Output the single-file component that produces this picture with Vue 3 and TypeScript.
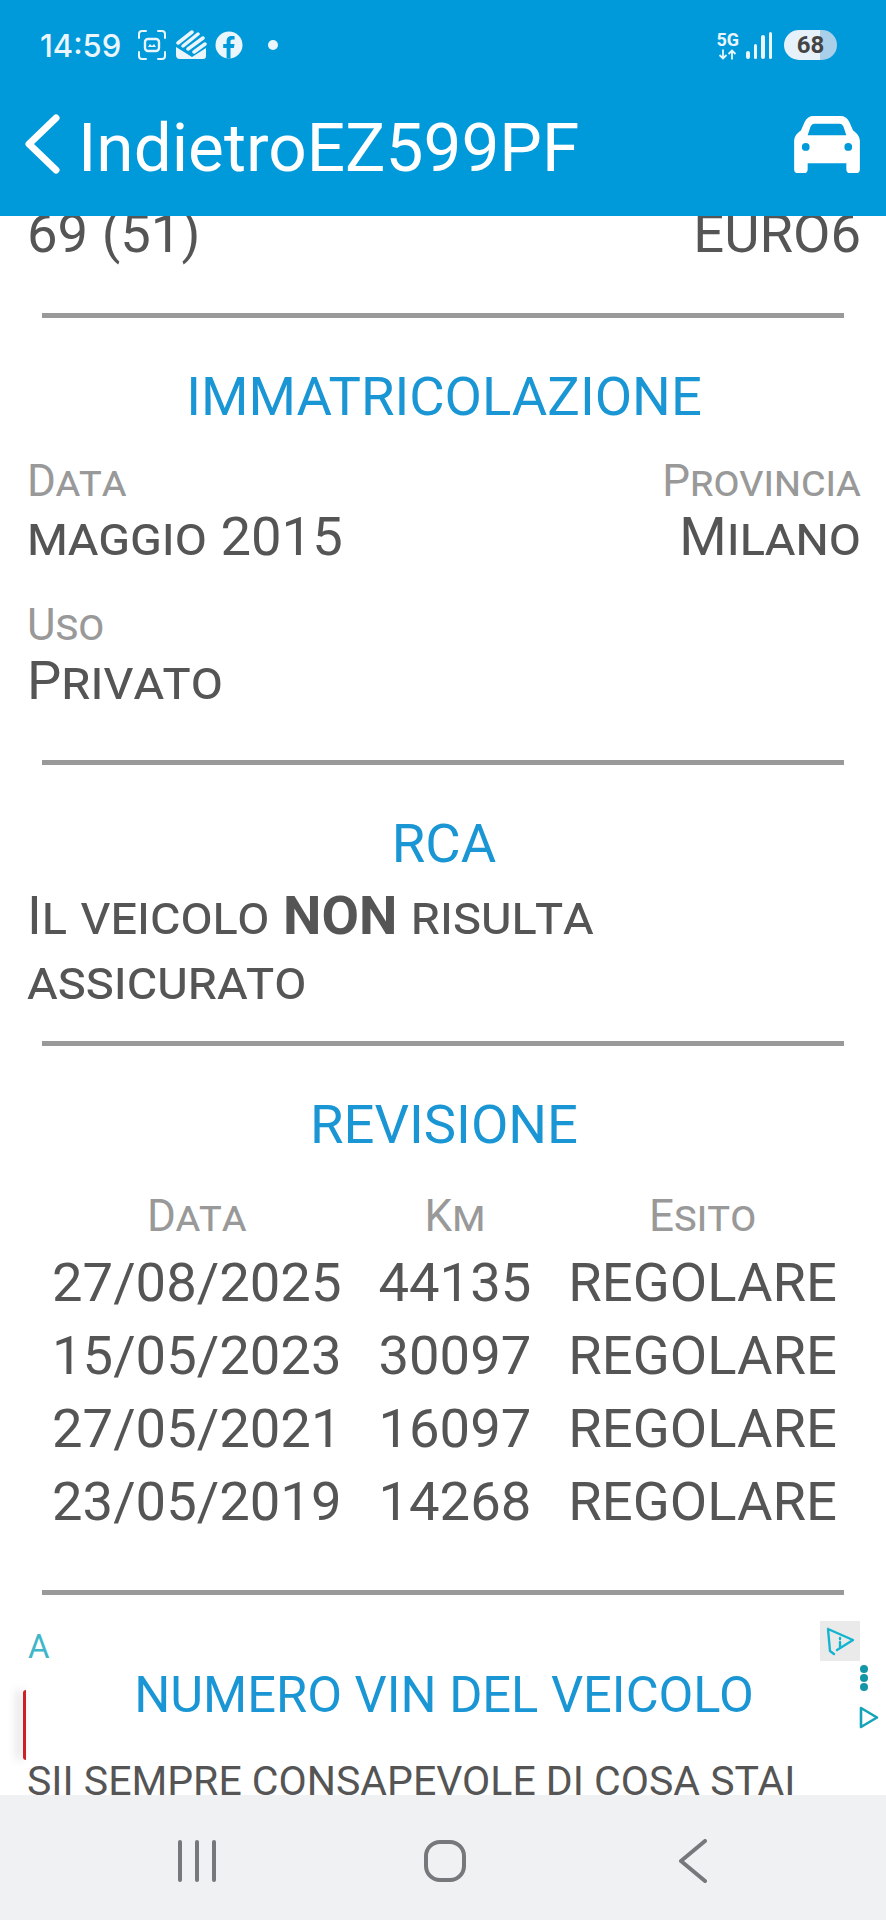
<template>
  <div class="phone">
    <header class="topbar">
      <div class="status">
        <div class="status-left">
          <span class="clock">14:59</span>
          <svg class="ic" width="30" height="30" viewBox="0 0 30 30" fill="none" stroke="#eaf6fc" stroke-width="2" stroke-linecap="round">
            <path d="M2 8V4a3 3 0 0 1 3-3h4M21 1h4a3 3 0 0 1 3 3v4M28 22v4a3 3 0 0 1-3 3h-4M9 29H5a3 3 0 0 1-3-3v-4" />
            <rect x="8" y="9" width="14" height="12" rx="3" stroke-width="2.4" />
            <path d="M11 17l2-3 2 2 2-2 2 3z" fill="#eaf6fc" stroke="none" />
          </svg>
          <svg class="ic" width="32" height="32" viewBox="0 0 32 32">
            <path d="M1 18 17 28l14-9v8a3 3 0 0 1-3 3H5a4 4 0 0 1-4-4z" fill="#eaf6fc" />
            <path d="M3 14 17 3M8 17 23 5M13 20 28 9M19 23 30 15" stroke="#eaf6fc" stroke-width="3.500" stroke-linecap="round" />
          </svg>
          <svg class="ic" width="28" height="28" viewBox="0 0 28 28">
            <circle cx="14" cy="14" r="13.5" fill="#eaf6fc" />
            <path d="M15.5 27.5V17h3.4l.6-4h-4v-2.4c0-1.2.5-2 2.1-2h2V5.200C19 5 17.800 5 16.700 5c-3 0-5.100 1.800-5.100 5.100V13H8.200v4h3.400v10.500z" fill="#0099da" />
          </svg>
          <span class="dot"></span>
        </div>
        <div class="status-right">
          <div class="net">
            <span class="net-label">5G</span>
            <svg width="20" height="11" viewBox="0 0 20 10" fill="none" stroke="#eaf6fc" stroke-width="1.800">
              <path d="M5 0v9M1.500 5.500 5 9l3.500-3.500M14 10V1M10.500 4.500 14 1l3.500 3.500" />
            </svg>
          </div>
          <div class="signal">
            <i v-for="h in signalBars" :key="h" :style="{ height: h + 'px' }"></i>
          </div>
          <div class="battery"><span>68</span></div>
        </div>
      </div>
      <div class="navbar">
        <div class="back">
          <svg width="38" height="60" viewBox="0 0 38 60" fill="none" stroke="#fff" stroke-width="7" stroke-linecap="round" stroke-linejoin="round">
            <path d="M32 4 5 30l27 26" />
          </svg>
          <span>IndietroEZ599PF</span>
        </div>
        <svg class="car" width="66" height="58" viewBox="0 0 68 60">
          <path fill="#fff" fill-rule="evenodd" d="M20 1h28c4 0 7 2 9 6l4 9c4 3 7 6 7 11v29a4 4 0 0 1-4 4h-6a4 4 0 0 1-4-4v-6H14v6a4 4 0 0 1-4 4H4a4 4 0 0 1-4-4V27c0-5 3-8 7-11l4-9c2-4 5-6 9-6zM21 9c-2 0-3 1-4 3l-3 9h40l-3-9c-1-2-2-3-4-3zM12 29a4 4 0 1 0 0 8 4 4 0 0 0 0-8zM56 29a4 4 0 1 0 0 8 4 4 0 0 0 0-8z" />
        </svg>
      </div>
    </header>

    <main class="scroller">
      <div class="scroll-inner">
        <div class="pair first">
          <div class="value">69 (51)</div>
          <div class="value">EURO6</div>
        </div>
        <hr />

        <h2>IMMATRICOLAZIONE</h2>
        <div class="pair">
          <div>
            <div class="label">Data</div>
            <div class="value sc">maggio 2015</div>
          </div>
          <div class="right">
            <div class="label">Provincia</div>
            <div class="value sc">Milano</div>
          </div>
        </div>
        <div class="use">
          <div class="label">Uso</div>
          <div class="value sc">Privato</div>
        </div>
        <hr />

        <h2>RCA</h2>
        <p class="value sc rca-text">Il veicolo <b>NON</b> risulta assicurato</p>
        <hr class="tight" />

        <h2>REVISIONE</h2>
        <div class="rev">
          <div class="label">Data</div>
          <div class="label">Km</div>
          <div class="label">Esito</div>
          <template v-for="r in revisions" :key="r.date">
            <div class="value">{{ r.date }}</div>
            <div class="value">{{ r.km }}</div>
            <div class="value">{{ r.result }}</div>
          </template>
        </div>
        <hr />

        <h2 class="vin">NUMERO VIN DEL VEICOLO</h2>
        <p class="vin-text">SII SEMPRE CONSAPEVOLE DI COSA STAI</p>
      </div>

      <!-- ad overlay bits -->
      <span class="ad-a">A</span>
      <span class="ad-red"></span>
      <div class="ad-info">
        <svg width="30" height="30" viewBox="0 0 30 30" fill="none" stroke="#14b4cf" stroke-width="2.400" stroke-linecap="round" stroke-linejoin="round">
          <path d="M3 3 28 14 12 24M3 3l2 22 4 3M15 12v1M15 16v5" />
        </svg>
      </div>
      <div class="ad-dots"><i></i><i></i><i></i></div>
      <svg class="ad-play" width="20" height="24" viewBox="0 0 20 24" fill="none" stroke="#14a3b8" stroke-width="2.600" stroke-linejoin="round">
        <path d="M2 2 18 11.500 2 21z" />
      </svg>
    </main>

    <nav class="sysnav">
      <svg width="42" height="42" viewBox="0 0 42 42" fill="none" stroke="#77787c" stroke-width="4" stroke-linecap="round">
        <path d="M5 2v38M22 2v38M39 2v38" />
      </svg>
      <svg width="44" height="44" viewBox="0 0 44 44" fill="none" stroke="#77787c" stroke-width="4">
        <rect x="3" y="3" width="38" height="38" rx="14" />
      </svg>
      <svg class="nav-back" width="30" height="44" viewBox="0 0 30 44" fill="none" stroke="#77787c" stroke-width="4" stroke-linecap="round" stroke-linejoin="round">
        <path d="M27 2 3 22l24 20" />
      </svg>
    </nav>
  </div>
</template>

<script setup lang="ts">
interface Revision {
  date: string
  km: string
  result: string
}

const signalBars: number[] = [8, 15, 24, 27]

const revisions: Revision[] = [
  { date: '27/08/2025', km: '44135', result: 'REGOLARE' },
  { date: '15/05/2023', km: '30097', result: 'REGOLARE' },
  { date: '27/05/2021', km: '16097', result: 'REGOLARE' },
  { date: '23/05/2019', km: '14268', result: 'REGOLARE' }
]
</script>

<style>
html,
body {
  margin: 0;
  background: #fff;
}
</style>

<style scoped>
.phone {
  width: 886px;
  height: 1920px;
  display: flex;
  flex-direction: column;
  overflow: hidden;
  background: #fff;
  font-family: Roboto, "Liberation Sans", sans-serif;
  color: #555;
}

.topbar {
  height: 216px;
  flex: none;
  background: #0099da;
  color: #fff;
}

.status {
  height: 90px;
  padding: 0 49px 0 40px;
  display: flex;
  justify-content: space-between;
  align-items: flex-end;
  box-sizing: border-box;
}

.status-left,
.status-right {
  display: flex;
  align-items: center;
  height: 32px;
  margin-bottom: 29px;
}

.clock {
  font-size: 31px;
  font-weight: 500;
  color: #eaf6fc;
  margin-right: 16px;
  font-family: Inter, Roboto, sans-serif;
}

.ic {
  margin-right: 8px;
}

.dot {
  width: 10px;
  height: 10px;
  border-radius: 50%;
  background: #eaf6fc;
  margin-left: 17px;
}

.net {
  display: flex;
  flex-direction: column;
  align-items: center;
  margin-right: 7px;
}

.net-label {
  font-size: 18px;
  line-height: 17px;
  font-weight: 700;
  color: #eaf6fc;
  margin-bottom: 1px;
}

.signal {
  display: flex;
  align-items: flex-end;
  gap: 4px;
  height: 27px;
  margin-right: 12px;
}

.signal i {
  width: 3.500px;
  background: #eaf6fc;
  border-radius: 2px;
}

.battery {
  width: 53px;
  height: 30px;
  border-radius: 15px;
  display: flex;
  align-items: center;
  justify-content: center;
  background: linear-gradient(90deg, #e6f1fa 0 68%, #a9cfe9 68%);
}

.battery span {
  font-size: 24px;
  font-weight: 700;
  color: #444;
}

.navbar {
  display: flex;
  justify-content: space-between;
  align-items: center;
  padding: 13px 26px 0 24px;
}

.back {
  display: flex;
  align-items: center;
  gap: 16px;
  font-size: 67.500px;
  line-height: 74px;
}

.back span {
  margin-top: 8px;
}

.scroller {
  flex: 1;
  position: relative;
  overflow: hidden;
}

.scroll-inner {
  margin-top: -13px;
  padding: 0 25px 0 27px;
}

.pair {
  display: flex;
  justify-content: space-between;
}

.right {
  text-align: right;
}

.label {
  font-size: 44px;
  line-height: 49px;
  color: #999;
  font-variant: small-caps;
}

.value {
  font-size: 54.400px;
  line-height: 62px;
  color: #555;
}

.sc {
  font-variant: small-caps;
}

hr {
  border: 0;
  height: 5px;
  background: #999;
  margin: 48px 17px 0 15px;
}

hr.tight {
  margin-top: 27.500px;
}

h2 {
  margin: 48px 0 0;
  font-size: 54.400px;
  line-height: 62px;
  font-weight: 400;
  text-align: center;
  color: #1a96d4;
}

.pair:not(.first) {
  margin-top: 29px;
}

.use {
  margin-top: 33px;
}

.rca-text {
  margin: 8px 0 0;
  width: 660px;
  line-height: 65px;
}

.rev {
  display: grid;
  grid-template-columns: auto auto auto;
  justify-content: center;
  justify-items: center;
  column-gap: 37px;
  margin-top: 36px;
  padding: 0 0 3px 1px;
}

.rev .label {
  margin-bottom: 5px;
}

.rev .value {
  line-height: 73.300px;
}

.vin {
  margin-top: 69px;
  font-size: 50.600px;
}

.vin-text {
  margin: 30px 0 0;
  white-space: nowrap;
  font-size: 41px;
  line-height: 50px;
  color: #555;
}

.ad-a {
  position: absolute;
  left: 28px;
  top: 1411px;
  font-size: 33px;
  color: #3fb6c9;
}

.ad-red {
  position: absolute;
  left: 23px;
  top: 1474px;
  width: 3px;
  height: 70px;
  background: #cc2128;
  border-radius: 3px 0 0 3px;
  box-shadow: -5px 0 10px rgba(0, 0, 0, 0.25);
}

.ad-info {
  position: absolute;
  left: 820px;
  top: 1405px;
  width: 40px;
  height: 40px;
  background: #eaeaea;
  display: flex;
  align-items: center;
  justify-content: center;
}

.ad-dots {
  position: absolute;
  left: 860px;
  top: 1449px;
  display: flex;
  flex-direction: column;
  gap: 1px;
}

.ad-dots i {
  width: 8px;
  height: 8px;
  border-radius: 50%;
  background: #1496a8;
}

.ad-play {
  position: absolute;
  left: 859px;
  top: 1490px;
}

.sysnav {
  height: 125px;
  flex: none;
  box-sizing: border-box;
  background: #f0f1f3;
  display: flex;
  align-items: center;
  gap: 206px;
  padding: 7px 0 0 175px;
}

.nav-back {
  margin-left: 5px;
}
</style>
